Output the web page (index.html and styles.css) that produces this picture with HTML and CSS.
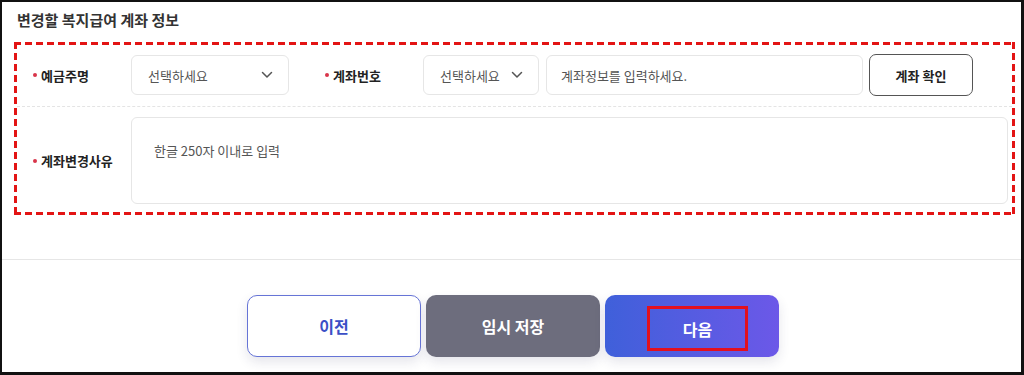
FILE: index.html
```html
<!DOCTYPE html>
<html>
<head>
  <meta charset="utf-8">
  <title>복지급여 계좌 변경</title>
  <link rel="stylesheet" href="styles.css">
</head>
<body>
  <div class="frame">
    <h2 class="section-title">변경할 복지급여 계좌 정보</h2>

    <div class="form-box">
      <div class="form-row first">
        <label class="field-label"><span class="dot"></span>예금주명</label>
        <div class="select holder">
          <span>선택하세요</span>
          <svg width="12" height="8" viewBox="0 0 12 8"><path d="M1.5 1.5 L6 6 L10.5 1.5" fill="none" stroke="#555" stroke-width="1.5" stroke-linecap="round" stroke-linejoin="round"/></svg>
        </div>
        <label class="field-label second"><span class="dot"></span>계좌번호</label>
        <div class="select bank">
          <span>선택하세요</span>
          <svg width="12" height="8" viewBox="0 0 12 8"><path d="M1.5 1.5 L6 6 L10.5 1.5" fill="none" stroke="#555" stroke-width="1.5" stroke-linecap="round" stroke-linejoin="round"/></svg>
        </div>
        <div class="text-input">계좌정보를 입력하세요.</div>
        <button class="check-btn">계좌 확인</button>
      </div>

      <div class="form-row second-row">
        <label class="field-label"><span class="dot"></span>계좌변경사유</label>
        <div class="textarea">한글 250자 이내로 입력</div>
      </div>
    </div>

    <div class="divider"></div>

    <div class="actions">
      <button class="btn prev">이전</button>
      <button class="btn save">임시 저장</button>
      <button class="btn next"><span class="mark">다음</span></button>
    </div>
  </div>
</body>
</html>
```

FILE: styles.css
```css
* {
  box-sizing: border-box;
}

body {
  margin: 0;
  font-family: "Noto Sans CJK KR", "Noto Sans", sans-serif;
  background: #fff;
}

.frame {
  width: 1024px;
  height: 375px;
  border-style: solid;
  border-color: #111;
  border-width: 2px 3px 3px 2px;
  overflow: hidden;
}

.section-title {
  margin: 8px 0 0 15px;
  font-size: 15px;
  line-height: 20px;
  font-weight: 700;
  color: #333;
}

.form-box {
  width: 1001px;
  height: 173px;
  margin: 12px 0 0 12px;
  padding: 3px;
  background:
    repeating-linear-gradient(90deg, #e31414 0 7px, transparent 7px 11px) left top / 100% 3px no-repeat,
    repeating-linear-gradient(90deg, #e31414 0 7px, transparent 7px 11px) left bottom / 100% 3px no-repeat,
    repeating-linear-gradient(180deg, #e31414 0 7px, transparent 7px 11px) left top / 3px 100% no-repeat,
    repeating-linear-gradient(180deg, #e31414 0 7px, transparent 7px 11px) right top / 3px 100% no-repeat;
}

.form-row {
  display: flex;
  align-items: center;
  padding: 9px 4px 10px 16px;
}

.form-row.first {
  border-bottom: 1px dashed #e4e4e4;
}

.form-row.second-row {
  padding-top: 10px;
}

.field-label {
  display: flex;
  align-items: center;
  width: 98px;
  flex-shrink: 0;
  font-size: 13px;
  font-weight: 700;
  color: #222;
}

.field-label.second {
  margin-left: 36px;
}

.dot {
  width: 4px;
  height: 4px;
  margin-right: 4px;
  border-radius: 50%;
  background: #d9354a;
}

.select {
  display: flex;
  align-items: center;
  justify-content: space-between;
  height: 40px;
  padding: 0 15px 0 16px;
  border: 1px solid #e6e6e6;
  border-radius: 6px;
  font-size: 13px;
  color: #555;
}

.select.holder {
  width: 158px;
}

.select.bank {
  width: 116px;
}

.text-input {
  display: flex;
  align-items: center;
  width: 317px;
  height: 40px;
  margin-left: 7px;
  padding-left: 14px;
  border: 1px solid #e6e6e6;
  border-radius: 6px;
  font-size: 13px;
  color: #555;
}

.check-btn {
  width: 104px;
  height: 42px;
  margin-left: 6px;
  border: 1px solid #555;
  border-radius: 7px;
  background: #fff;
  font-family: inherit;
  font-size: 13px;
  font-weight: 700;
  color: #222;
}

.textarea {
  width: 877px;
  height: 87px;
  padding: 23px 22px;
  border: 1px solid #e6e6e6;
  border-radius: 6px;
  font-size: 13px;
  color: #555;
}

.divider {
  margin-top: 44px;
  border-top: 1px solid #e6e6e6;
}

.actions {
  display: flex;
  justify-content: center;
  gap: 5px;
  margin: 35px 0 0 3px;
}

.btn {
  display: flex;
  align-items: center;
  justify-content: center;
  width: 174px;
  height: 62px;
  border-radius: 10px;
  font-family: inherit;
  font-size: 16px;
  font-weight: 700;
  box-shadow: 0 5px 12px rgba(40, 40, 90, 0.12);
}

.btn.prev {
  background: #fff;
  border: 1px solid #6674d6;
  color: #3b4fc6;
}

.btn.save {
  background: #6d6d7d;
  border: none;
  color: #fff;
}

.btn.next {
  background: linear-gradient(90deg, #3f60da, #6c58e8);
  border: none;
  color: #fff;
}

.mark {
  display: flex;
  align-items: center;
  justify-content: center;
  width: 101px;
  height: 45px;
  margin: 5px 0 0 11px;
  border: 3px solid #e3101e;
}
```
